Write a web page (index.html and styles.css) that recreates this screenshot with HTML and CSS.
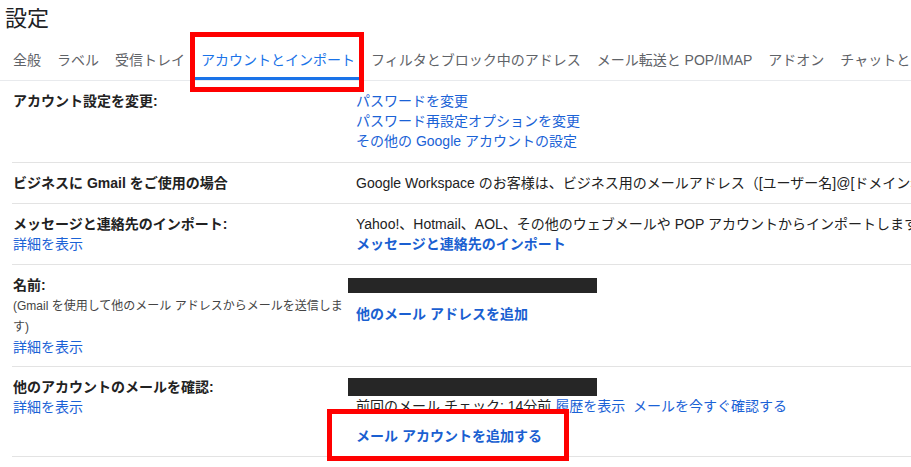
FILE: index.html
```html
<!DOCTYPE html>
<html lang="ja">
<head>
  <meta charset="UTF-8" />
  <meta name="viewport" content="width=device-width, initial-scale=1" />
  <title>設定 - アカウントとインポート</title>
  <link rel="stylesheet" href="styles.css">
</head>
<body>
  <div class="page">

    <h1 class="title">設定</h1>

    <nav class="tabs">
      <a class="tab">全般</a>
      <a class="tab">ラベル</a>
      <a class="tab">受信トレイ</a>
      <a class="tab active">アカウントとインポート</a>
      <a class="tab">フィルタとブロック中のアドレス</a>
      <a class="tab">メール転送と POP/IMAP</a>
      <a class="tab">アドオン</a>
      <a class="tab">チャットと Meet</a>
      <a class="tab">詳細</a>
    </nav>

    <div class="row row-first">
      <div class="label"><b>アカウント設定を変更:</b></div>
      <div class="value">
        <a class="link">パスワードを変更</a><br>
        <a class="link">パスワード再設定オプションを変更</a><br>
        <a class="link">その他の Google アカウントの設定</a>
      </div>
    </div>

    <div class="row">
      <div class="label"><b>ビジネスに Gmail をご使用の場合</b></div>
      <div class="value">
        Google Workspace のお客様は、ビジネス用のメールアドレス（[ユーザー名]@[ドメイン名].com）で Gmail を使用できます。
      </div>
    </div>

    <div class="row">
      <div class="label">
        <b>メッセージと連絡先のインポート:</b><br>
        <a class="link">詳細を表示</a>
      </div>
      <div class="value">
        Yahoo!、Hotmail、AOL、その他のウェブメールや POP アカウントからインポートします。<br>
        <a class="link strong">メッセージと連絡先のインポート</a>
      </div>
    </div>

    <div class="row row-name">
      <div class="label">
        <b>名前:</b><br>
        <span class="note">(Gmail を使用して他のメール アドレスからメールを送信します)</span><br>
        <a class="link">詳細を表示</a>
      </div>
      <div class="value">
        <div class="redact redact-name"></div>
        <a class="link strong">他のメール アドレスを追加</a>
      </div>
    </div>

    <div class="row">
      <div class="label">
        <b>他のアカウントのメールを確認:</b><br>
        <a class="link">詳細を表示</a>
      </div>
      <div class="value">
        <div class="redact redact-check"></div>
        前回のメール チェック: 14分前 <a class="link">履歴を表示</a>&nbsp; <a class="link">メールを今すぐ確認する</a>
        <div class="add-account"><a class="link strong">メール アカウントを追加する</a></div>
      </div>
    </div>

    <div class="mark mark-tab"></div>
    <div class="mark mark-add"></div>
  </div>
</body>
</html>
```

FILE: styles.css
```css
body {
  margin: 0;
  background: #fff;
}
.page {
  position: relative;
  width: 911px;
  height: 467px;
  overflow: hidden;
  font-family: "Liberation Sans", "Noto Sans CJK JP", sans-serif;
  font-size: 14px;
  line-height: 20px;
  color: #222;
}
.title {
  margin: 0;
  height: 40px;
  padding-left: 5px;
  font-size: 22px;
  font-weight: normal;
  line-height: 38px;
  color: #202124;
}
.tabs {
  display: flex;
  height: 40px;
  padding-left: 5px;
  border-bottom: 1px solid #e8eaed;
  white-space: nowrap;
}
.tab {
  position: relative;
  flex: none;
  padding: 0 8px;
  line-height: 40px;
  color: #5f6368;
}
.tab.active {
  color: #1a73e8;
}
.tab.active::after {
  content: "";
  position: absolute;
  left: 2px;
  right: 4px;
  bottom: 0;
  height: 3px;
  background: #1a73e8;
}
.row {
  display: grid;
  grid-template-columns: 344px minmax(0, 1fr);
  margin-left: 12px;
  padding: 10px 0;
  border-bottom: 1px solid #e3e3e3;
}
.row-first {
  padding-bottom: 11px;
}
.row-name {
  padding-bottom: 9px;
}
.label {
  padding: 0 9px 0 1px;
}
.label b {
  font-weight: bold;
  color: #222;
}
.note {
  font-size: 12px;
  color: #444;
}
.value {
  white-space: nowrap;
}
.link {
  color: #1a62d6;
  cursor: pointer;
}
.link.strong {
  font-weight: bold;
  color: #1a5fd1;
}
.redact {
  width: 249px;
  margin-left: -8px;
  background: #262626;
}
.redact-name {
  height: 15px;
  margin-top: 3px;
  margin-bottom: 11px;
}
.redact-check {
  height: 18px;
  margin-top: 1px;
}
.add-account {
  margin-top: 10px;
}
.mark {
  position: absolute;
  border: 5px solid #ff0000;
  pointer-events: none;
}
.mark-tab {
  left: 190px;
  top: 32px;
  width: 164px;
  height: 50px;
}
.mark-add {
  left: 327px;
  top: 409px;
  width: 232px;
  height: 42px;
}
```
